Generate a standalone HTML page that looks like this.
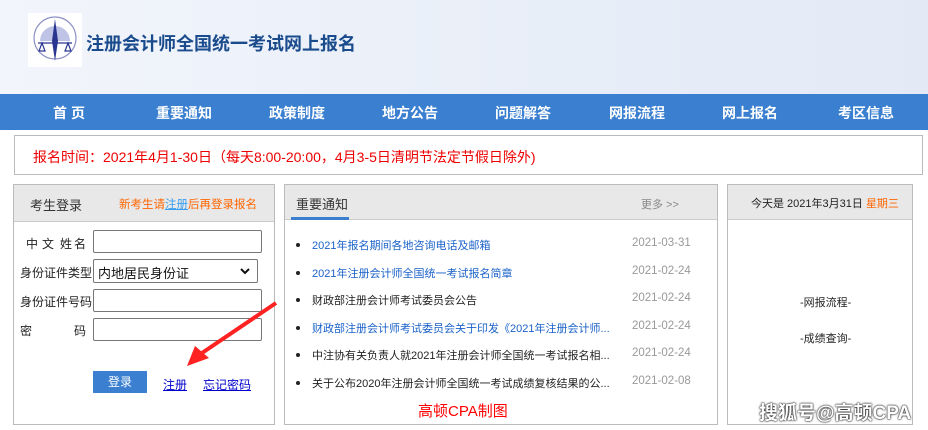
<!DOCTYPE html>
<html><head><meta charset="utf-8"><style>
*{margin:0;padding:0;box-sizing:border-box}
body{width:928px;height:430px;position:relative;background:#fff;font-family:"Liberation Sans","Noto Sans CJK SC",sans-serif;overflow:hidden}
.a{position:absolute;white-space:nowrap}
.hdr{left:0;top:0;width:928px;height:94px;background:linear-gradient(90deg,#f2f5fb,#e8eef8 60%,#e3eaf6)}
.nav{left:0;top:94px;width:928px;height:36px;background:#3a7fd0}
.nav span{position:absolute;top:9px;color:#fff;font-weight:bold;font-size:14px;transform:translateX(-50%)}
.box{border:1px solid #bbb;background:#fff}
.ph{background:#e8e8e8;border-bottom:1px solid #ccc}
.inp{position:absolute;left:93px;width:169px;height:23px;border:1px solid #777;border-radius:2px;background:#fff}
.lb{position:absolute;font-size:12px;color:#222}
.li{position:absolute;left:296px;font-size:11px}
.li:before{content:"";position:absolute;left:0;top:6px;width:4px;height:4px;border-radius:50%;background:#222}
.li b{font-weight:normal;margin-left:16px}
.dt{position:absolute;left:632px;font-size:11.5px;color:#999}
</style></head><body>
<div class="a hdr"></div>
<div class="a" style="left:28px;top:13px;width:54px;height:54px;background:#fff"></div>
<svg class="a" style="left:28px;top:13px" width="54" height="54" viewBox="0 0 54 54">
<circle cx="27" cy="25" r="21" fill="none" stroke="#8a8fc4" stroke-width="1.2"/>
<path d="M12 28a15 15 0 0 1 30 0" fill="#bfc4e6"/>
<path d="M27 6l3 22-3 20-3-20z" fill="#2a3590"/>
<path d="M10 30h34M14 30l-3 8h6zM40 30l-3 8h6z" stroke="#2a3590" fill="none" stroke-width="1.2"/>
</svg>
<div class="a" style="left:86px;top:30px;font-size:18px;font-weight:bold;color:#1a4b8c">注册会计师全国统一考试网上报名</div>
<div class="a nav">
<span style="left:69px">首 页</span><span style="left:184px">重要通知</span><span style="left:297px">政策制度</span><span style="left:410px">地方公告</span><span style="left:523px">问题解答</span><span style="left:637px">网报流程</span><span style="left:750px">网上报名</span><span style="left:866px">考区信息</span>
</div>
<div class="a box" style="left:14px;top:135px;width:909px;height:40px"></div>
<div class="a" style="left:33px;top:147px;font-size:14px;color:#e00">报名时间：2021年4月1-30日（每天8:00-20:00，4月3-5日清明节法定节假日除外)</div>

<div class="a box" style="left:13px;top:184px;width:262px;height:241px"></div>
<div class="a ph" style="left:14px;top:185px;width:260px;height:37px"></div>
<div class="a" style="left:30px;top:195px;font-size:13px;color:#333">考生登录</div>
<div class="a" style="left:119px;top:196px;font-size:11.5px;color:#f60">新考生请<span style="color:#3a9ef0;text-decoration:underline">注册</span>后再登录报名</div>
<div class="lb" style="left:26px;top:235px">中</div><div class="lb" style="left:42px;top:235px">文</div><div class="lb" style="left:60px;top:235px">姓</div><div class="lb" style="left:74px;top:235px">名</div>
<div class="lb" style="left:20px;top:264px">身份证件类型</div>
<div class="lb" style="left:20px;top:293px">身份证件号码</div>
<div class="lb" style="left:20px;top:322px">密</div><div class="lb" style="left:74px;top:322px">码</div>
<div class="inp" style="top:230px;height:23px"></div>
<div class="inp" style="top:259px;height:24px;width:165px"><span style="position:absolute;left:4px;top:3px;font-size:13px;color:#111">内地居民身份证</span><svg style="position:absolute;right:7px;top:8px" width="10" height="7"><path d="M1 1l4 4 4-4" stroke="#111" stroke-width="2" fill="none"/></svg></div>
<div class="inp" style="top:289px;height:23px"></div>
<div class="inp" style="top:318px;height:23px"></div>
<div class="a" style="left:93px;top:371px;width:54px;height:22px;background:#3a7fd0;color:#fff;font-size:12px;text-align:center;line-height:22px">登录</div>
<div class="a" style="left:163px;top:376px;font-size:12px;color:#00c;text-decoration:underline">注册</div>
<div class="a" style="left:203px;top:376px;font-size:12px;color:#00c;text-decoration:underline">忘记密码</div>
<svg class="a" style="left:185px;top:300px" width="95" height="70"><path d="M91 3L14 55" stroke="#f22" stroke-width="4"/><path d="M2 66L10 46 24 58z" fill="#f22"/></svg>

<div class="a box" style="left:284px;top:184px;width:434px;height:241px"></div>
<div class="a ph" style="left:285px;top:185px;width:432px;height:35px"></div>
<div class="a" style="left:296px;top:194px;font-size:13px;color:#333">重要通知</div>
<div class="a" style="left:291px;top:217px;width:58px;height:3px;background:#3a7fd0"></div>
<div class="a" style="left:641px;top:196px;font-size:11px;color:#888">更多 &gt;&gt;</div>
<div class="li" style="top:237px;color:#1a62c8"><b>2021年报名期间各地咨询电话及邮箱</b></div><div class="dt" style="top:237px">2021-03-31</div>
<div class="li" style="top:265px;color:#1a62c8"><b>2021年注册会计师全国统一考试报名简章</b></div><div class="dt" style="top:265px">2021-02-24</div>
<div class="li" style="top:292px;color:#222"><b>财政部注册会计师考试委员会公告</b></div><div class="dt" style="top:292px">2021-02-24</div>
<div class="li" style="top:320px;color:#1a62c8"><b>财政部注册会计师考试委员会关于印发《2021年注册会计师...</b></div><div class="dt" style="top:320px">2021-02-24</div>
<div class="li" style="top:347px;color:#222"><b>中注协有关负责人就2021年注册会计师全国统一考试报名相...</b></div><div class="dt" style="top:347px">2021-02-24</div>
<div class="li" style="top:375px;color:#222"><b>关于公布2020年注册会计师全国统一考试成绩复核结果的公...</b></div><div class="dt" style="top:375px">2021-02-08</div>
<div class="a" style="left:418px;top:400px;font-size:15px;color:#f00">高顿CPA制图</div>

<div class="a box" style="left:727px;top:184px;width:186px;height:241px"></div>
<div class="a ph" style="left:728px;top:185px;width:184px;height:35px"></div>
<div class="a" style="left:751px;top:195px;font-size:11px;color:#222">今天是 2021年3月31日 <span style="color:#f60">星期三</span></div>
<div class="a" style="left:800px;top:294px;font-size:11px;color:#222">-网报流程-</div>
<div class="a" style="left:800px;top:330px;font-size:11px;color:#222">-成绩查询-</div>
<div class="a" style="left:759px;top:398px;font-size:19px;font-weight:bold;color:#fff;text-shadow:0 0 2px #000,0 0 1px #000">搜狐号@高顿CPA</div>
</body></html>
